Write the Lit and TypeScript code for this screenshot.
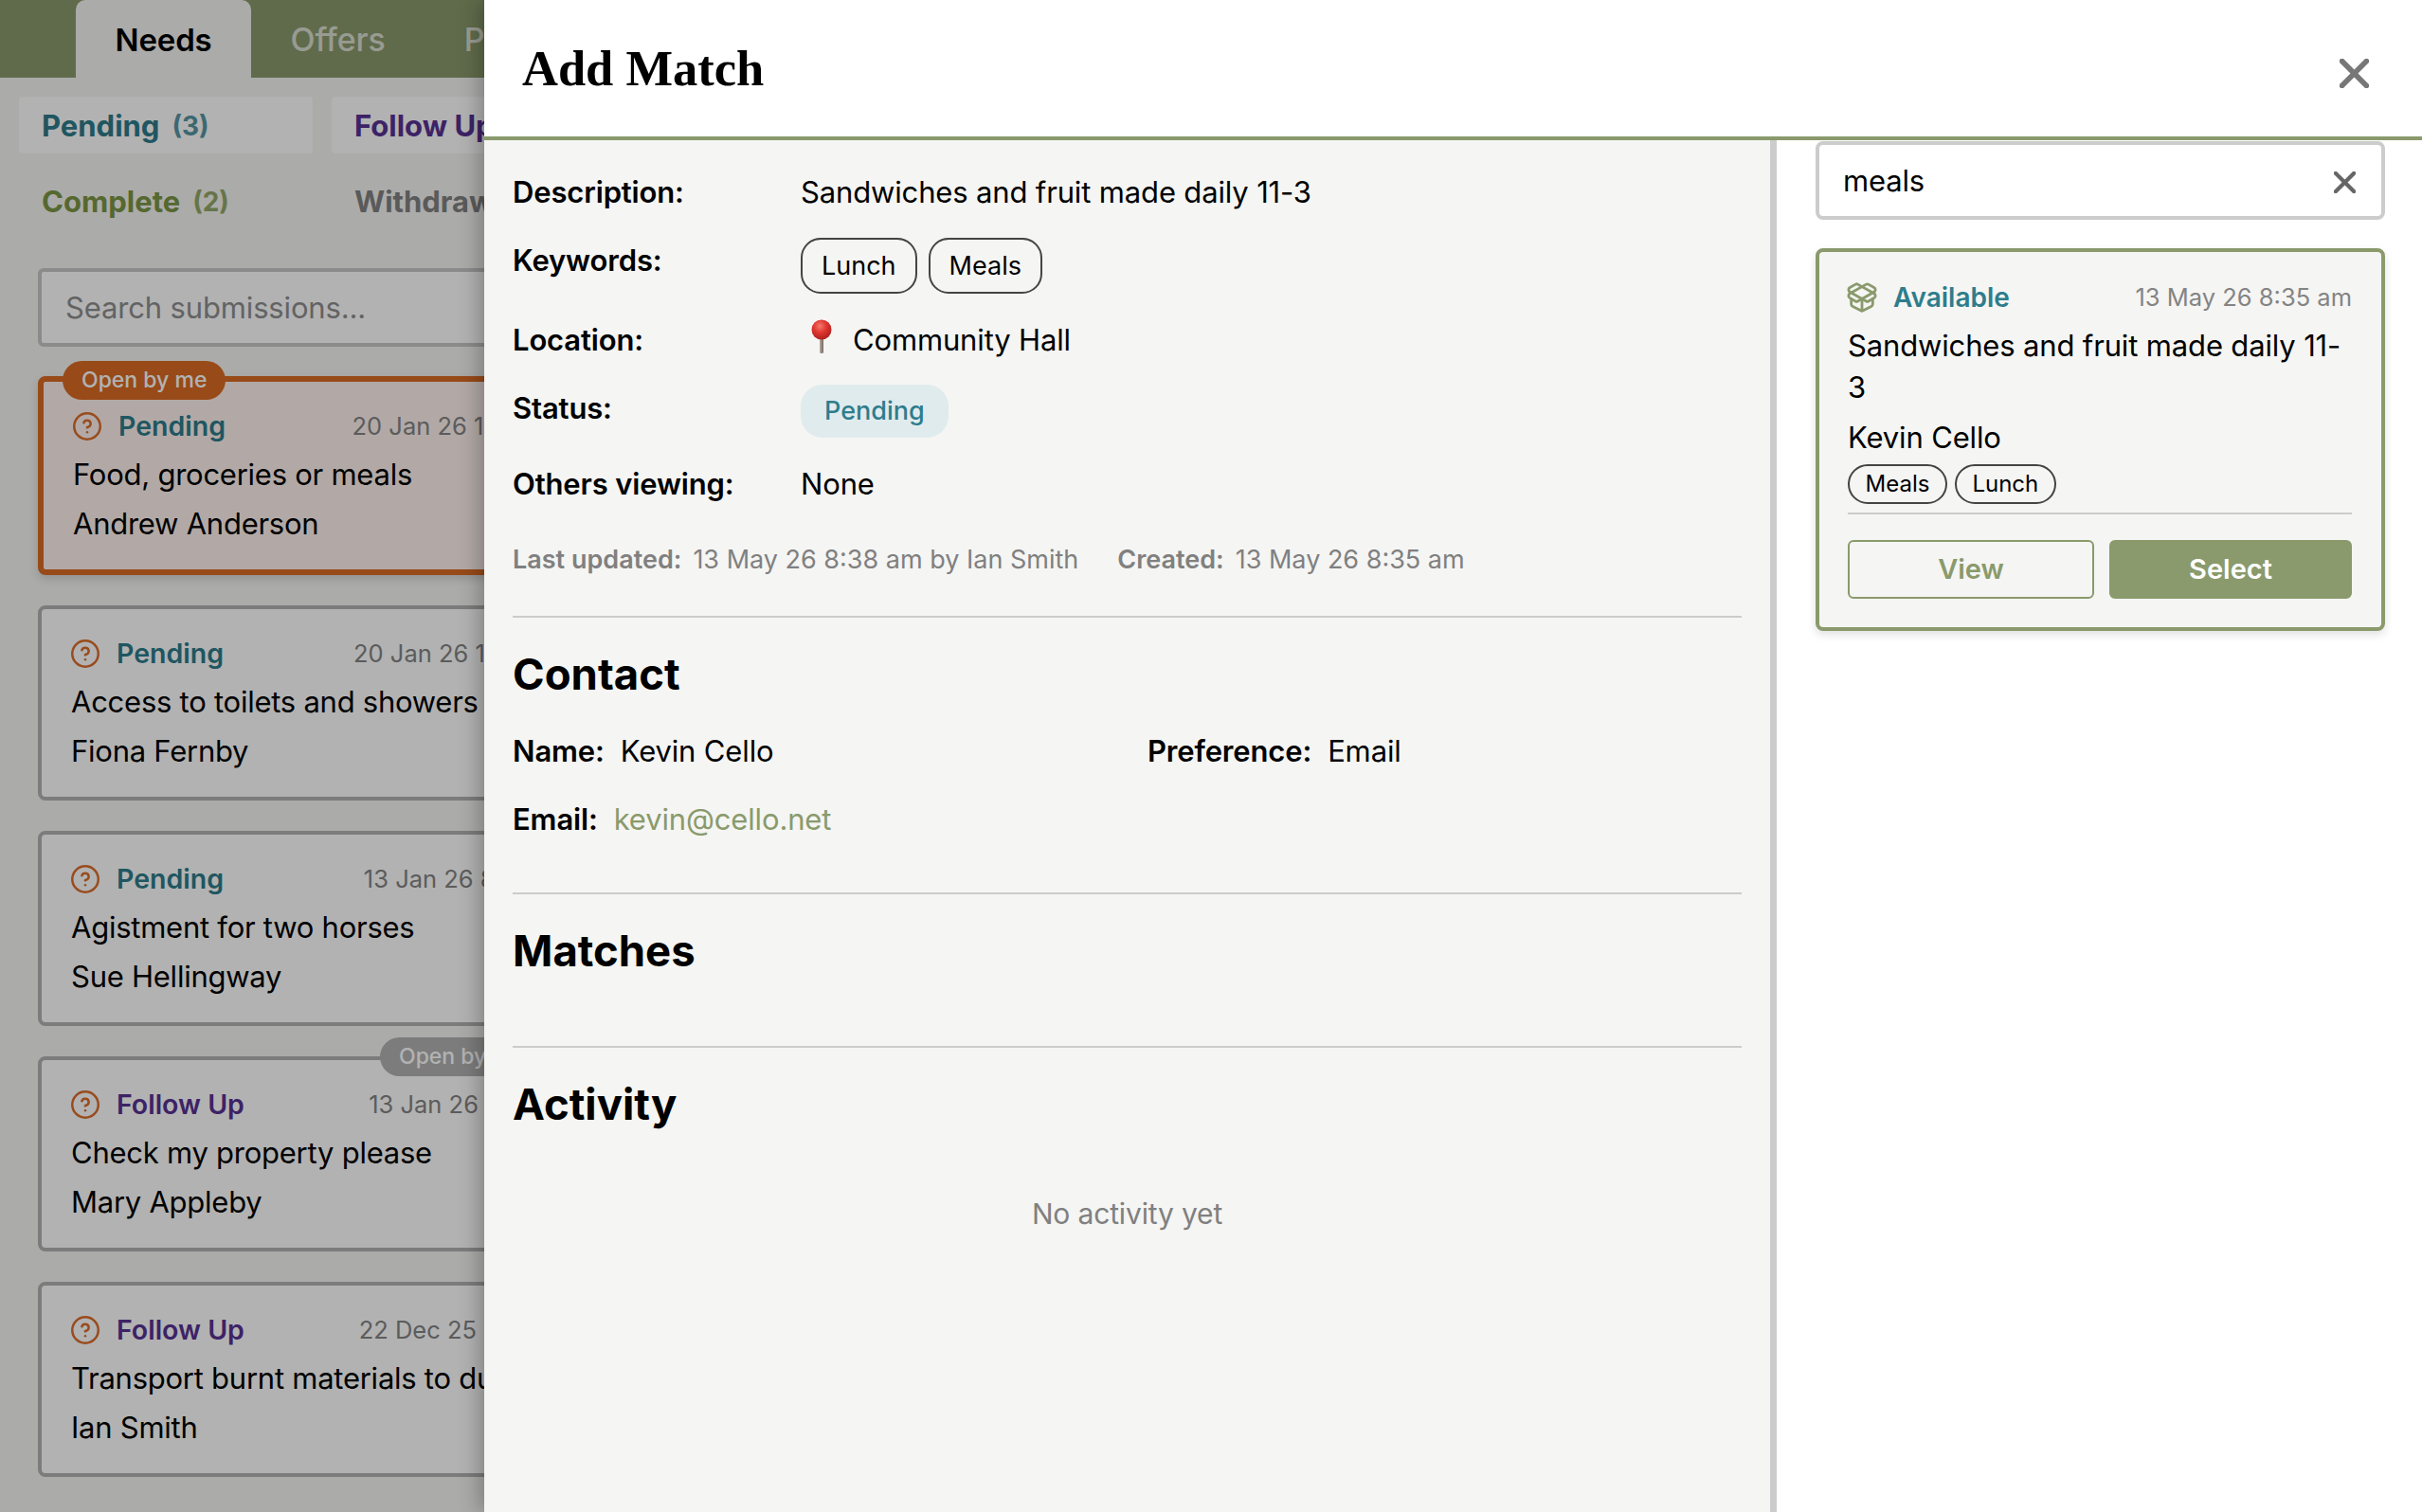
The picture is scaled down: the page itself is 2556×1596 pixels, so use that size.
import { LitElement, css, html, svg } from "lit";
import { customElement } from "lit/decorators.js";

const helpIcon = html`<svg class="ico" viewBox="0 0 24 24" fill="none" stroke="#dc6d2a" stroke-width="2" stroke-linecap="round" stroke-linejoin="round">
  <circle cx="12" cy="12" r="11"></circle>
  <path d="M9.09 9a3 3 0 0 1 5.83 1c0 2-3 3-3 3"></path>
  <path d="M12 17h.01"></path>
</svg>`;

const boxIcon = html`<svg class="ico box" viewBox="0 0 24 24" fill="none" stroke="#8a9a6c" stroke-width="2" stroke-linecap="round" stroke-linejoin="round">
  ${svg`<path d="M12 22v-9"></path>
  <path d="M15.17 2.21a1.67 1.67 0 0 1 1.63 0L21 4.57a1.93 1.93 0 0 1 0 3.36L8.82 14.79a1.655 1.655 0 0 1-1.64 0L3 12.43a1.93 1.93 0 0 1 0-3.36z"></path>
  <path d="M20 13v3.87a2.06 2.06 0 0 1-1.11 1.83l-6 3.08a1.93 1.93 0 0 1-1.78 0l-6-3.08A2.06 2.06 0 0 1 4 16.87V13"></path>
  <path d="M21 12.43a1.93 1.93 0 0 0 0-3.36L8.83 2.2a1.64 1.64 0 0 0-1.63 0L3 4.57a1.93 1.93 0 0 0 0 3.36l12.18 6.86a1.636 1.636 0 0 0 1.63 0z"></path>`}
</svg>`;

const pinIcon = html`<svg class="pin" viewBox="0 0 24 36">
  <defs>
    <radialGradient id="ball" cx="0.42" cy="0.32" r="0.75">
      <stop offset="0" stop-color="#f47a6c"></stop>
      <stop offset="0.45" stop-color="#e0352f"></stop>
      <stop offset="1" stop-color="#a51e1c"></stop>
    </radialGradient>
    <linearGradient id="stick" x1="0" x2="1" y1="0" y2="0">
      <stop offset="0" stop-color="#b9aca4"></stop>
      <stop offset="1" stop-color="#77685f"></stop>
    </linearGradient>
  </defs>
  <rect x="10" y="18" width="4" height="18" rx="1.6" fill="url(#stick)"></rect>
  <circle cx="12" cy="11" r="10.5" fill="url(#ball)"></circle>
</svg>`;

const closeIcon = (cls: string) => html`<svg class=${cls} viewBox="0 0 24 24" fill="none" stroke="currentColor" stroke-linecap="square">
  <path d="M2 2L22 22M22 2L2 22"></path>
</svg>`;

type Sub = {
  status: string;
  cls: string;
  date: string;
  title: string;
  name: string;
  mine?: boolean;
  other?: boolean;
};

const subs: Sub[] = [
  { status: "Pending", cls: "pending", date: "20 Jan 26 11:22 am", title: "Food, groceries or meals", name: "Andrew Anderson", mine: true },
  { status: "Pending", cls: "pending", date: "20 Jan 26 10:15 am", title: "Access to toilets and showers", name: "Fiona Fernby" },
  { status: "Pending", cls: "pending", date: "13 Jan 26 8:35 am", title: "Agistment for two horses", name: "Sue Hellingway" },
  { status: "Follow Up", cls: "follow", date: "13 Jan 26 8:12 am", title: "Check my property please", name: "Mary Appleby", other: true },
  { status: "Follow Up", cls: "follow", date: "22 Dec 25 4:12 pm", title: "Transport burnt materials to dump", name: "Ian Smith" },
];

@customElement("app-root")
export class AppRoot extends LitElement {
  static styles = css`
    :host {
      display: block;
      position: relative;
      width: 2556px;
      height: 1596px;
      overflow: hidden;
      background: #f5f5f3;
      font-family: Inter, "Noto Sans", sans-serif;
      font-size: 31px;
      letter-spacing: -0.15px;
      line-height: 44px;
      color: #000;
    }
    * {
      box-sizing: border-box;
    }
    .ico {
      width: 30px;
      height: 30px;
      flex: none;
    }
    .ico.box {
      width: 34px;
      height: 34px;
      margin: 0 -2px 0 -2px;
    }

    /* page behind the modal */
    .tabs {
      display: flex;
      width: 700px;
      height: 82px;
      padding-left: 80px;
      background: #8a9a6c;
    }
    .tab {
      padding: 19px 41.5px 0;
      font-size: 34px;
      font-weight: 500;
      line-height: 46px;
      color: rgba(255, 255, 255, 0.7);
    }
    .tab.on {
      background: #f5f5f3;
      border-radius: 10px 10px 0 0;
      font-size: 33px;
      font-weight: 600;
      color: #000;
    }
    .filters {
      display: grid;
      grid-template-columns: 310px 310px;
      gap: 20px;
      padding: 20px;
      width: 700px;
      letter-spacing: 0;
    }
    .filter {
      display: flex;
      align-items: center;
      gap: 13px;
      height: 60px;
      padding: 1px 0 0 24px;
      border-radius: 4px;
      font-weight: 700;
      white-space: nowrap;
    }
    .filter.on {
      background: #fff;
    }
    .filter span {
      font-size: 28px;
      opacity: 0.8;
    }
    .filter.pending,
    .card .pending {
      color: #2d7c8b;
    }
    .filter.follow,
    .card .follow {
      color: #583193;
    }
    .filter.complete {
      color: #7a9645;
    }
    .filter.withdrawn {
      color: #828282;
    }
    .list {
      width: 600px;
      margin: 21px 0 0 40px;
    }
    .search {
      display: flex;
      align-items: center;
      height: 83px;
      padding-left: 25px;
      border: 4px solid #c8c8c8;
      border-radius: 6px;
      background: #fff;
      color: #8f8f8f;
      white-space: nowrap;
    }
    .card {
      position: relative;
      height: 206px;
      margin-top: 32px;
      padding: 27px 31px 0;
      border: 4px solid #b2b2b2;
      border-radius: 8px;
      background: #fff;
      white-space: nowrap;
    }
    .card.mine {
      height: 210px;
      margin-top: 31px;
      border: 6px solid #da6b25;
      background: #fff2ee;
      box-shadow: 0 4px 10px rgba(0, 0, 0, 0.15);
    }
    .badge {
      position: absolute;
      top: -22px;
      left: 20px;
      width: 172px;
      height: 41px;
      padding-left: 20px;
      border-radius: 21px;
      background: #da6b25;
      color: #fff;
      font-size: 23px;
      font-weight: 500;
      letter-spacing: 0;
      line-height: 41px;
    }
    .badge.other {
      top: -24px;
      left: auto;
      right: 63px;
      background: #b2b2b2;
    }
    .head {
      display: flex;
      align-items: center;
      gap: 18px;
      height: 45px;
      font-size: 28.5px;
      font-weight: 600;
      letter-spacing: 0;
    }
    .card .head {
      padding-bottom: 6px;
    }
    .date {
      margin-left: auto;
      font-size: 25.5px;
      font-weight: 400;
      color: #848484;
    }
    .line {
      letter-spacing: -0.25px;
      line-height: 52px;
    }
    .scrim {
      position: absolute;
      inset: 0;
      background: rgba(0, 0, 0, 0.3);
    }

    /* modal */
    .modal {
      position: absolute;
      top: 0;
      left: 511px;
      right: 0;
      bottom: 0;
      display: flex;
      flex-direction: column;
      background: #f5f5f3;
      box-shadow: -6px 0 20px rgba(0, 0, 0, 0.25);
    }
    .modal-head {
      display: flex;
      align-items: flex-start;
      justify-content: space-between;
      flex: none;
      height: 148px;
      padding: 42px 56px 0 40px;
      border-bottom: 4px solid #8a9a6c;
      background: #fff;
    }
    h1 {
      margin: 0;
      font-family: "Liberation Serif", serif;
      font-size: 52.5px;
      font-weight: 700;
      letter-spacing: 0;
      line-height: 60px;
    }
    .close {
      width: 31px;
      height: 31px;
      margin-top: 20px;
      stroke-width: 4.4;
      color: #777;
    }
    .modal-body {
      display: flex;
      flex: 1;
      min-height: 0;
    }
    .main {
      flex: none;
      width: 1364px;
      padding: 33px 30px 0;
      border-right: 7px solid #ccc;
    }
    .row {
      display: grid;
      grid-template-columns: 304px 1fr;
      margin-bottom: 26px;
    }
    .row.location {
      margin-bottom: 25px;
      padding-top: 1px;
    }
    .row.state {
      margin-bottom: 27px;
    }
    .row.state b {
      padding-top: 3px;
    }
    .row:last-of-type {
      margin-bottom: 0;
    }
    b {
      font-weight: 600;
    }
    .chips {
      display: flex;
      gap: 12px;
    }
    .chip {
      display: flex;
      align-items: center;
      height: 59px;
      padding: 0 20px;
      border: 2px solid #444;
      border-radius: 21px;
      font-size: 27px;
      letter-spacing: 0;
    }
    .label-low {
      padding-top: 2px;
    }
    .loc {
      display: flex;
      align-items: center;
    }
    .pin {
      width: 24px;
      height: 36px;
      margin: -8px 21px 0 10px;
    }
    .status {
      display: inline-flex;
      align-items: center;
      height: 56px;
      padding: 0 25px;
      border-radius: 23px;
      background: #e0ebee;
      color: #2e7d8c;
      font-size: 27px;
      font-weight: 500;
      letter-spacing: 0;
    }
    .meta {
      display: flex;
      gap: 41px;
      margin-top: 39px;
      font-size: 27px;
      letter-spacing: 0;
      line-height: 38px;
      color: #808080;
    }
    .meta b {
      margin-right: 12px;
    }
    hr {
      height: 2px;
      margin: 0;
      border: 0;
      background: #ccc;
    }
    .meta + hr {
      margin-top: 40px;
    }
    h2 {
      margin: 33px 0 0;
      font-size: 45.5px;
      font-weight: 700;
      letter-spacing: 0;
      line-height: 54px;
    }
    .contact {
      display: grid;
      grid-template-columns: 670px 1fr;
      row-gap: 28px;
      margin: 32px 0 55px;
    }
    .contact b {
      margin-right: 17px;
    }
    .contact .mail {
      color: #8a9a6c;
    }
    .spacer {
      height: 73px;
    }
    .empty {
      margin-top: 66px;
      font-size: 30px;
      color: #808080;
      text-align: center;
    }

    .side {
      flex: 1;
      min-width: 0;
      padding: 1px 39px 0 41px;
      background: #fff;
    }
    .side-search {
      display: flex;
      align-items: center;
      justify-content: space-between;
      height: 83px;
      padding: 0 27px 0 25px;
      border: 4px solid #ccc;
      border-radius: 8px;
    }
    .clear {
      width: 23px;
      height: 23px;
      margin-top: 4px;
      stroke-width: 4.4;
      color: #666;
    }
    .match {
      margin-top: 30px;
      padding: 25px 31px 30px 30px;
      border: 4px solid #8a9a6c;
      border-radius: 8px;
      background: #f5f5f3;
      box-shadow: 0 4px 10px rgba(0, 0, 0, 0.12);
    }
    .match .head {
      font-size: 28px;
      color: #2e7d8c;
    }
    .match .title {
      margin-top: 7px;
    }
    .match .who {
      margin-top: 9px;
    }
    .mini-chips {
      display: flex;
      gap: 8px;
      margin-top: 6px;
      padding-bottom: 9px;
      border-bottom: 2px solid #ccc;
    }
    .mini {
      display: flex;
      align-items: center;
      height: 42px;
      padding: 0 16.5px;
      border: 2px solid #444;
      border-radius: 21px;
      font-size: 24px;
      letter-spacing: 0;
    }
    .actions {
      display: grid;
      grid-template-columns: 260px 256px;
      gap: 16px;
      margin-top: 27px;
    }
    .btn {
      display: flex;
      align-items: center;
      justify-content: center;
      height: 62px;
      border: 2px solid #8a9a6c;
      border-radius: 6px;
      color: #8a9a6c;
      font-size: 29px;
      font-weight: 600;
      letter-spacing: 0;
    }
    .btn.fill {
      background: #8a9a6c;
      color: #fff;
    }
  `;

  renderCard(s: Sub) {
    return html`<div class="card ${s.mine ? "mine" : ""}">
      ${s.mine ? html`<div class="badge">Open by me</div>` : ""}
      ${s.other ? html`<div class="badge other">Open by Kim</div>` : ""}
      <div class="head">
        ${helpIcon}
        <span class=${s.cls}>${s.status}</span>
        <span class="date">${s.date}</span>
      </div>
      <div class="line">${s.title}</div>
      <div class="line">${s.name}</div>
    </div>`;
  }

  render() {
    return html`
      <div class="tabs">
        <div class="tab on">Needs</div>
        <div class="tab">Offers</div>
        <div class="tab">Profile</div>
      </div>
      <div class="filters">
        <div class="filter on pending">Pending <span>(3)</span></div>
        <div class="filter on follow">Follow Up <span>(2)</span></div>
        <div class="filter complete">Complete <span>(2)</span></div>
        <div class="filter withdrawn">Withdrawn <span>(0)</span></div>
      </div>
      <div class="list">
        <div class="search">Search submissions...</div>
        ${subs.map((s) => this.renderCard(s))}
      </div>
      <div class="scrim"></div>

      <div class="modal">
        <div class="modal-head">
          <h1>Add Match</h1>
          ${closeIcon("close")}
        </div>
        <div class="modal-body">
          <div class="main">
            <div class="row">
              <b>Description:</b>
              <span>Sandwiches and fruit made daily 11-3</span>
            </div>
            <div class="row">
              <b class="label-low">Keywords:</b>
              <div class="chips">
                <div class="chip">Lunch</div>
                <div class="chip">Meals</div>
              </div>
            </div>
            <div class="row location">
              <b>Location:</b>
              <div class="loc">${pinIcon}<span>Community Hall</span></div>
            </div>
            <div class="row state">
              <b>Status:</b>
              <div><span class="status">Pending</span></div>
            </div>
            <div class="row">
              <b>Others viewing:</b>
              <span>None</span>
            </div>
            <div class="meta">
              <span><b>Last updated:</b>13 May 26 8:38 am by Ian Smith</span>
              <span><b>Created:</b>13 May 26 8:35 am</span>
            </div>
            <hr />
            <h2>Contact</h2>
            <div class="contact">
              <span><b>Name:</b>Kevin Cello</span>
              <span><b>Preference:</b>Email</span>
              <span><b>Email:</b><span class="mail">kevin@cello.net</span></span>
            </div>
            <hr />
            <h2>Matches</h2>
            <div class="spacer"></div>
            <hr />
            <h2>Activity</h2>
            <div class="empty">No activity yet</div>
          </div>
          <div class="side">
            <div class="side-search">
              <span>meals</span>
              ${closeIcon("clear")}
            </div>
            <div class="match">
              <div class="head">
                ${boxIcon}
                <span>Available</span>
                <span class="date">13 May 26 8:35 am</span>
              </div>
              <div class="title">Sandwiches and fruit made daily 11-3</div>
              <div class="who">Kevin Cello</div>
              <div class="mini-chips">
                <div class="mini">Meals</div>
                <div class="mini">Lunch</div>
              </div>
              <div class="actions">
                <div class="btn">View</div>
                <div class="btn fill">Select</div>
              </div>
            </div>
          </div>
        </div>
      </div>
    `;
  }
}
